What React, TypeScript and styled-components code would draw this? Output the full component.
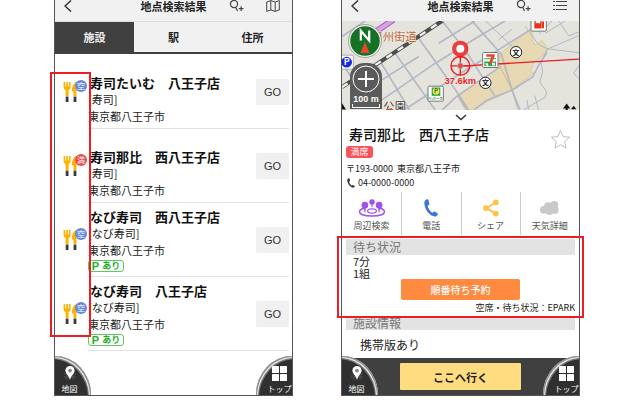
import React from "react";
import styled, { createGlobalStyle, css } from "styled-components";

const GlobalStyle = createGlobalStyle`
  *, *::before, *::after { box-sizing: border-box; }
  body {
    margin: 0;
    background: #fff;
    color: #222;
    font-family: "Noto Sans CJK JP", "Noto Sans", sans-serif;
  }
  h1, h2, h3, p, ul { margin: 0; padding: 0; font-weight: 400; }
  ul { list-style: none; }
  button {
    border: 0;
    padding: 0;
    background: none;
    color: inherit;
    font: inherit;
    cursor: pointer;
  }
  svg { display: block; }
`;

const Page = styled.main`
  display: grid;
  grid-template-columns: 1fr 1fr;
  gap: 48px;
  min-height: 100vh;
  padding: 0 60px 4px 54px;
`;

const Phone = styled.section`
  position: relative;
  display: flex;
  flex-direction: column;
  min-width: 0;
  border: 1px solid #555;
  border-top: 0;
  background: #fff;
`;

const Header = styled.header`
  display: grid;
  grid-template-columns: 1fr auto 1fr;
  align-items: center;
  height: 21px;
  padding: 0 9px 9px;
  background: #f1f1f1;
`;

const HeaderTitle = styled.h1`
  font-size: 11px;
  line-height: 12px;
  font-weight: 700;
`;

const HeaderActions = styled.div`
  display: flex;
  justify-content: flex-end;
  gap: 22px;
  padding-right: 3px;
`;

const IconButton = styled.button`
  display: flex;
  justify-self: start;
`;

const Tabs = styled.nav`
  display: grid;
  grid-template-columns: repeat(3, 1fr);
  height: 33px;
  border-top: 1px solid #ddd;
  border-bottom: 2px solid #404040;
  background: #f1f1f1;
`;

const Tab = styled.button<{ $active?: boolean }>`
  font-size: 11px;
  font-weight: 700;
  background: ${(p) => (p.$active ? "#404040" : "transparent")};
  color: ${(p) => (p.$active ? "#eee" : "#222")};
`;

const Results = styled.ul`
  padding-top: 1px;
`;

const Row = styled.li`
  display: grid;
  grid-template-columns: 33px 1fr;
  min-height: 74px;
`;

const Category = styled.div`
  position: relative;
  display: flex;
  align-items: center;
  padding-left: 8px;
`;

const SeatBadge = styled.span<{ $full: boolean }>`
  position: absolute;
  right: 1px;
  top: calc(50% - 12px);
  width: 12px;
  height: 12px;
  border-radius: 50%;
  background: ${(p) => (p.$full ? "#f0484d" : "#6289df")};
  color: #fff;
  font-size: 8px;
  line-height: 12px;
  text-align: center;
`;

const RowBody = styled.div`
  display: flex;
  align-items: center;
  justify-content: space-between;
  margin-right: 3px;
  border-bottom: 1px solid #e2e2e2;
`;

const RowText = styled.div`
  align-self: flex-end;
  padding-bottom: 3px;
  white-space: nowrap;
`;

const RowTitle = styled.h2`
  padding-left: 2px;
  font-size: 13px;
  line-height: 17px;
  font-weight: 700;
  color: #111;
`;

const RowLine = styled.p`
  font-size: 11px;
  line-height: 17px;
`;

const ParkingTag = styled.p`
  display: flex;
  align-items: center;
  justify-content: center;
  gap: 3px;
  width: 36px;
  height: 12px;
  margin: 1px 0;
  border: 1px solid #5fc95f;
  border-radius: 3px;
  color: #1fae2b;
  font-size: 9px;
  line-height: 10px;
  font-weight: 700;
`;

const ParkingMark = styled.span`
  font-family: "Liberation Sans", sans-serif;
  font-size: 11px;
`;

const GoButton = styled.button`
  width: 33px;
  height: 26px;
  border-radius: 1px;
  background: #f0f0f0;
  color: #333;
  font-family: "Liberation Sans", sans-serif;
  font-size: 11px;
`;

const CornerButton = styled.button<{ $side: "left" | "right" }>`
  position: absolute;
  bottom: 0;
  display: flex;
  flex-direction: column;
  align-items: center;
  justify-content: flex-end;
  gap: 3px;
  width: 36px;
  height: 39px;
  padding-bottom: 1px;
  background: #303030;
  color: #fff;
  font-size: 8px;
  line-height: 10px;
  white-space: nowrap;
  ${(p) =>
    p.$side === "left"
      ? css`
          left: 0;
          padding-right: 7px;
          border-top-right-radius: 100%;
          box-shadow: inset -1px 1px 0 #8d8d8d, inset -2px 2px 0 #e4e4e4, inset -3px 3px 0 #777;
        `
      : css`
          right: 0;
          padding-left: 11px;
          border-top-left-radius: 100%;
          box-shadow: inset 1px 1px 0 #8d8d8d, inset 2px 2px 0 #e4e4e4, inset 3px 3px 0 #777;
        `}
`;

const Callout = styled.div<{ $area: "icons" | "wait" }>`
  position: absolute;
  border: 2px solid #ee1c25;
  pointer-events: none;
  ${(p) =>
    p.$area === "icons"
      ? css`
          top: 72px;
          left: -5px;
          width: 41px;
          height: 265px;
        `
      : css`
          inset: -3px -5px -1px;
        `}
`;

const MapArea = styled.div`
  position: relative;
  height: 89px;
  overflow: hidden;
  background: #e5e4dc;
`;

const Compass = styled.button`
  position: absolute;
  top: 3px;
  left: 6px;
`;

const ZoomIn = styled.button`
  position: absolute;
  top: 42px;
  left: 8px;
  display: flex;
  flex-direction: column;
  align-items: center;
  width: 32px;
  height: 46px;
  border-radius: 14px 14px 0 0;
  background: #5b5b5b;
  color: #fff;
  font-family: "Liberation Sans", sans-serif;
  font-size: 9px;
  line-height: 10px;
  font-weight: 700;
  white-space: nowrap;
`;

const ScaleBar = styled.span`
  width: 28px;
  height: 4px;
  border: 1px solid #fff;
  border-top: 0;
`;

const Collapse = styled.button`
  display: flex;
  align-items: center;
  justify-content: center;
  height: 14px;
`;

const Place = styled.div`
  display: flex;
  align-items: flex-start;
  justify-content: space-between;
  padding: 0 8px 0 4px;
  white-space: nowrap;
`;

const PlaceName = styled.h2`
  padding-left: 3px;
  font-size: 14px;
  line-height: 21px;
  font-weight: 500;
  color: #111;
`;

const FullTag = styled.p`
  width: 27px;
  height: 12px;
  margin: 1px 0 4px;
  border-radius: 3px;
  background: #f9525a;
  color: #fff;
  font-size: 9px;
  line-height: 12px;
  text-align: center;
`;

const PlaceLine = styled.p`
  display: flex;
  align-items: center;
  gap: 2px;
  font-size: 9px;
  line-height: 14px;
`;

const Favorite = styled.button`
  margin-top: 5px;
`;

const Actions = styled.div`
  display: grid;
  grid-template-columns: repeat(4, 1fr);
  height: 43px;
  margin-top: 2px;
`;

const Action = styled.button`
  display: flex;
  flex-direction: column;
  align-items: center;
  gap: 2px;
  padding-top: 7px;
  font-size: 9px;
  line-height: 14px;
  color: #555;
  & + & { border-left: 1px solid #ccc; }
`;

const WaitSection = styled.section`
  position: relative;
  margin-top: 4px;
  height: 78px;
`;

const SectionTitle = styled.h3`
  height: 16px;
  margin: 0 4px;
  padding-left: 7px;
  background: #e3e3e3;
  color: #777;
  font-size: 12px;
  line-height: 15px;
`;

const InfoTitle = styled(SectionTitle)`
  height: 13px;
  line-height: 12px;
`;

const WaitLine = styled.p`
  padding-left: 11px;
  font-size: 11px;
  line-height: 12px;
`;

const ReserveButton = styled.button`
  display: block;
  width: 50%;
  height: 21px;
  margin: 0 auto;
  border-radius: 2px;
  background: #ff8a40;
  color: #fff;
  font-size: 10px;
  line-height: 20px;
  font-weight: 500;
`;

const Source = styled.p`
  padding-right: 4px;
  font-size: 9px;
  line-height: 16px;
  text-align: right;
`;

const Feature = styled.p`
  padding: 6px 0 0 18px;
  font-size: 12px;
  line-height: 18px;
`;

const Footer = styled.footer`
  display: flex;
  align-items: center;
  justify-content: center;
  height: 37px;
  margin-top: auto;
  background: #404040;
`;

const GoHereButton = styled.button`
  width: 51%;
  height: 27px;
  border-radius: 1px;
  background: #ffdc80;
  color: #222;
  font-size: 11px;
  font-weight: 700;
`;

const BackIcon = () => (
  <svg width="8" height="12" viewBox="0 0 8 12" fill="none" stroke="#333" strokeWidth="1.5">
    <path d="M7 .5 1 6l6 5.5" />
  </svg>
);

const SearchPlusIcon = () => (
  <svg width="15" height="12" viewBox="0 0 15 12" fill="none" stroke="#444" strokeWidth="1.2">
    <circle cx="5" cy="4" r="3.6" />
    <path d="M6.5 7.3 8.6 11M9.8 8.6h4.7M12.1 6.2V11" />
  </svg>
);

const MapIcon = () => (
  <svg width="14" height="12" viewBox="0 0 14 12" fill="none" stroke="#444" strokeLinejoin="round">
    <path d="M.7 2 4.8.6 9.2 2l4.1-1.4V10l-4.1 1.4L4.8 10 .7 11.4zM4.8.6V10M9.2 2v9.4" />
  </svg>
);

const ListIcon = () => (
  <svg width="14" height="10" viewBox="0 0 14 10" stroke="#444">
    <path d="M0 1.5h2M3 1.5h11M0 5.5h2M3 5.5h11M0 9.5h2M3 9.5h11" />
  </svg>
);

const CutleryIcon = () => (
  <svg width="15" height="22" viewBox="0 0 15 22">
    <path
      d="M.6 1v5.300c0 1.600.8 2.300 2 2.700V15h3V9c1.200-.4 2-1.100 2-2.700V1H6v4.600H5V1H3.200v4.600h-1V1z"
      fill="#fdb300"
    />
    <path d="M13.400.4C10.400 2.400 8.600 6 8.800 10.400h1.700V15h2.900z" fill="#fdb300" />
    <path d="M2.700 15.500h2.800V21H2.700zM10.600 15.500h2.800V21h-2.800z" fill="#3c3c3c" />
  </svg>
);

const PinIcon = () => (
  <svg width="14" height="15" viewBox="0 0 14 15">
    <path d="M1 8h12M1 11h12M4 6v8M10 6v8" stroke="#666" strokeWidth=".6" />
    <path d="M7 0a4.600 4.600 0 0 0-4.600 4.600C2.400 7.500 5.600 9.200 7 14c1.400-4.800 4.600-6.500 4.600-9.400A4.600 4.600 0 0 0 7 0z" fill="#fff" />
    <circle cx="7" cy="4.600" r="1.900" fill="#888" />
  </svg>
);

const TopIcon = () => (
  <svg width="15" height="15" viewBox="0 0 15 15" fill="#fff">
    <rect width="7" height="7" rx=".6" />
    <rect x="8" width="7" height="7" rx=".6" />
    <rect y="8" width="7" height="7" rx=".6" />
    <rect x="8" y="8" width="7" height="7" rx=".6" />
  </svg>
);

const handset =
  "M3.300.4C1 1 .3 3.200.7 6c.8 5.500 4.700 11 9.700 13 2.100.8 4.300.1 5.200-1.900.3-.6.100-1-.4-1.300l-3-1.800c-.6-.3-1-.2-1.400.3l-.9 1.100C7 14 4.700 10.300 4.200 7.400l1.400-.7c.5-.3.700-.6.600-1.200L5.300 1.300C5.100.5 4.400.1 3.300.4z";

const HandsetIcon = ({ size, color }: { size: number; color: string }) => (
  <svg width={size} height={size} viewBox="-2 0 20 20">
    <path d={handset} fill={color} />
  </svg>
);

const NearbyIcon = () => (
  <svg width="28" height="18" viewBox="0 0 28 19">
    <path
      d="M6 9.500C2.500 10.500.8 12 .8 13.500.8 16.300 6.500 18 14 18s13.200-1.700 13.200-4.500c0-1.500-1.700-3-5.200-4"
      fill="none"
      stroke="#a04ff0"
      strokeWidth="1.500"
    />
    <ellipse cx="14" cy="12.600" rx="4.600" ry="2.200" fill="none" stroke="#a04ff0" strokeWidth="1.300" />
    <g fill="#a04ff0">
      <circle cx="6.500" cy="6.500" r="3.500" />
      <circle cx="21.500" cy="6.500" r="3.500" />
      <circle cx="14" cy="3.200" r="2.900" />
      <path d="M5.500 9h2l-.5 5H6zM20.500 9h2l-.5 5h-1zM13.200 5.500h1.600L14.400 9h-.8z" />
    </g>
  </svg>
);

const ShareIcon = () => (
  <svg width="18" height="18" viewBox="0 0 18 19">
    <path d="M14 3.500 4 9.700l10 5.800" fill="none" stroke="#fdc44c" strokeWidth="2" />
    <g fill="#fdc44c">
      <circle cx="14" cy="3.600" r="3" />
      <circle cx="3.600" cy="9.600" r="3" />
      <circle cx="14" cy="15.400" r="3" />
    </g>
  </svg>
);

const CloudIcon = () => (
  <svg width="21" height="18" viewBox="0 0 21 19" fill="#c9c9c9">
    <circle cx="4.500" cy="11.500" r="4" />
    <circle cx="9" cy="7.500" r="4.200" />
    <circle cx="15.500" cy="6.500" r="4.300" />
    <circle cx="16" cy="11.500" r="4.200" />
    <circle cx="10.500" cy="13" r="4" />
  </svg>
);

const StarIcon = () => (
  <svg width="21" height="21" viewBox="0 0 21 21" fill="none" stroke="#bdbdbd" strokeLinejoin="round">
    <path d="m10.500 1.500 2.600 6.100 6.500.6-4.900 4.400 1.400 6.500-5.600-3.400-5.600 3.400 1.400-6.500-4.900-4.400 6.500-.6z" />
  </svg>
);

const SchoolMark = ({ x, y }: { x: number; y: number }) => (
  <g>
    <circle cx={x} cy={y} r="17" fill="#fff" stroke="#222" strokeWidth="3" />
    <text x={x} y={y + 8} fontSize="22" fontWeight="700" textAnchor="middle" fill="#222">
      文
    </text>
  </g>
);

const StreetMap = () => (
  <svg width="100%" height="100%" viewBox="50 63 711 268" preserveAspectRatio="xMidYMid slice">
    <path
      fill="#e6d9b3"
      stroke="#d5bd86"
      strokeWidth="2"
      d="m397 287 128-86 35 70-75 34-40 26h-25zM523 163l90-73 10 15-3 15 10 15 20-13 17 26-22 27-18 7-12 33 10 5-65 50-37-71z"
    />
    <g fill="none" stroke="#b3b7c6" strokeWidth="5">
      <path d="M208 158 330 331M278 112 390 270l40 61M165 185l88 146M350 63l68 85 90 140M50 190l60 90M440 63l88 100 32 108 24 60" />
      <path d="M170 300 330 190l125-77 85-50M235 331l170-110 100-62 108-68 50-28M350 331l45-42 130-88M340 130l110-67M170 240l110-70M50 110l70-47" />
      <path d="M397 287 427 331M445 331l40-30 75-30 62-40 20-38 23-35" />
      <path strokeWidth="3" d="m600 80 40 55 27 12 96 12M667 147l-20 40 5 25-8 35 20 30-4 15-65 38M700 63l30 45 32-12M668 147l94-40M745 220l18-25M745 220l18 18M680 63l-40 40M660 100l60-37M560 271l18 58" />
      <path strokeWidth="3" d="m480 63 80 76M520 120l40-32M610 331l-5-30M640 331l-12-44" />
    </g>
    <path d="m152 95 53-36" stroke="#9a5fae" strokeWidth="18" />
    <path d="m152 95 53-36" stroke="#dba0e8" strokeWidth="12" />
    <path d="M50 262 352 62" stroke="#4c4c4c" strokeWidth="12" />
    <path d="M50 262 352 62" stroke="#f4f4f4" strokeWidth="7" strokeDasharray="20 20" />
    <text x="138" y="124" fontSize="34" fill="#b9673f" stroke="#f3efe6" strokeWidth="3" paintOrder="stroke">
      甲州街道
    </text>
    <text x="174" y="334" fontSize="34" fill="#333" stroke="#f3efe6" strokeWidth="3" paintOrder="stroke">
      公園
    </text>
    <path d="M182 331c4-6 20-6 24 0z" fill="#e8442e" />
    <path d="m50 310 12 19H50zM724 311l11 15h-8v5h-6v-5h-8zM745 318l8 10h-16z" fill="#111" />
    <g>
      <rect x="30" y="166" width="54" height="42" rx="4" fill="#fff" stroke="#888" strokeWidth="2" />
      <circle cx="64" cy="187" r="16" fill="#1626e8" />
      <text x="64" y="197" fontSize="27" fontWeight="700" fill="#fff" textAnchor="middle">P</text>
    </g>
    <g>
      <rect x="308" y="259" width="46" height="45" rx="3" fill="#fff" stroke="#777" strokeWidth="3" />
      <path d="M319 263h26v25h-26z" fill="#2aa84a" />
      <circle cx="332" cy="274" r="10" fill="#f5e33a" />
      <text x="332" y="281" fontSize="18" fontWeight="700" fill="#14803a" textAnchor="middle">P</text>
      <path d="M313 290h36v11h-36z" fill="#fff" />
      <text x="331" y="300" fontSize="11" fontWeight="700" fill="#14803a" textAnchor="middle">リパーク</text>
    </g>
    <path d="m405 199 357-21" stroke="#f01820" strokeWidth="4" />
    <g>
      <rect x="472" y="158" width="46" height="45" rx="3" fill="#fff" stroke="#777" strokeWidth="3" />
      <path d="M477 175h35v24h-35z" fill="#2aa84a" />
      <path d="M477 178h35v7h-35z" fill="#fff" />
      <path d="M483 163h25v7l-10 22h-8l8-21h-15z" fill="#e8442e" />
      <path d="M480 190h7l3 8h-8zM500 189h9v8h-9z" fill="#fff" />
    </g>
    <g>
      <rect x="617" y="48" width="46" height="46" rx="3" fill="#fff" stroke="#777" strokeWidth="3" />
      <path d="M627 58h22v28h-22zM650 65h6v20h-6z" fill="#e8341c" />
      <path d="M631 62h14v8h-14z" fill="#fff" />
    </g>
    <SchoolMark x={572} y={157} />
    <SchoolMark x={480} y={249} />
    <path d="M405 123c-29 0-31 36-12 45l12 7 12-7c19-9 17-45-12-45z" fill="#e8403c" />
    <circle cx="405" cy="147" r="12" fill="#fff" />
    <g fill="none" stroke="#f01820" strokeWidth="4">
      <circle cx="405" cy="198" r="28" />
      <path d="M405 170v19M405 207v19M377 198h19M414 198h19" />
    </g>
    <circle cx="405" cy="198" r="8" fill="#f0443c" stroke="#999" strokeWidth="3" />
    <text
      x="405"
      y="252"
      fontFamily="Liberation Sans, sans-serif"
      fontSize="28"
      fontWeight="700"
      fill="#e8232a"
      stroke="#f3efe6"
      strokeWidth="3"
      paintOrder="stroke"
      textAnchor="middle"
    >
      37.6km
    </text>
  </svg>
);

const CompassIcon = () => (
  <svg width="34" height="34" viewBox="0 0 34 34">
    <circle cx="17" cy="17" r="15.500" fill="#157225" stroke="#eee" strokeWidth="1.500" />
    <circle cx="17" cy="17" r="16.500" fill="none" stroke="#888" strokeWidth=".7" />
    <path d="M12.800 16.500V6.800l8.400 9.700V6.600" fill="none" stroke="#fff" strokeWidth="2.200" />
    <path d="m17 18 4.500 11h-9z" fill="#f0442e" />
  </svg>
);

const PlusIcon = () => (
  <svg width="30" height="31" viewBox="0 0 30 31" fill="none" stroke="#fff">
    <circle cx="15" cy="16" r="13" />
    <path d="M7 16h16M15 8v16" strokeWidth="2" />
  </svg>
);

interface Spot {
  name: string;
  kind: string;
  full?: boolean;
  parking?: boolean;
}

const spots: Spot[] = [
  { name: "寿司たいむ　八王子店", kind: "[寿司]" },
  { name: "寿司那比　西八王子店", kind: "[寿司]", full: true },
  { name: "なび寿司　西八王子店", kind: "[なび寿司]", parking: true },
  { name: "なび寿司　八王子店", kind: "[なび寿司]", parking: true },
];

const TopBar = ({ action, label }: { action: React.ReactNode; label: string }) => (
  <Header>
    <IconButton aria-label="戻る"><BackIcon /></IconButton>
    <HeaderTitle>地点検索結果</HeaderTitle>
    <HeaderActions>
      <IconButton aria-label="検索条件を追加"><SearchPlusIcon /></IconButton>
      <IconButton aria-label={label}>{action}</IconButton>
    </HeaderActions>
  </Header>
);

const CornerButtons = () => (
  <>
    <CornerButton $side="left"><PinIcon />地図</CornerButton>
    <CornerButton $side="right"><TopIcon />トップ</CornerButton>
  </>
);

const ResultList = () => (
  <Phone>
    <TopBar action={<MapIcon />} label="地図表示" />
    <Tabs>
      <Tab $active>施設</Tab>
      <Tab>駅</Tab>
      <Tab>住所</Tab>
    </Tabs>
    <Results>
      {spots.map((spot) => (
        <Row key={spot.name}>
          <Category>
            <CutleryIcon />
            <SeatBadge $full={!!spot.full}>{spot.full ? "満" : "空"}</SeatBadge>
          </Category>
          <RowBody>
            <RowText>
              <RowTitle>{spot.name}</RowTitle>
              <RowLine>{spot.kind}</RowLine>
              <RowLine>東京都八王子市</RowLine>
              {spot.parking && <ParkingTag><ParkingMark>P</ParkingMark>あり</ParkingTag>}
            </RowText>
            <GoButton>GO</GoButton>
          </RowBody>
        </Row>
      ))}
    </Results>
    <CornerButtons />
    <Callout $area="icons" />
  </Phone>
);

const SpotDetail = () => (
  <Phone>
    <TopBar action={<ListIcon />} label="一覧表示" />
    <MapArea>
      <StreetMap />
      <Compass aria-label="北を上にする"><CompassIcon /></Compass>
      <ZoomIn aria-label="拡大">
        <PlusIcon />
        100 m
        <ScaleBar />
      </ZoomIn>
    </MapArea>
    <Collapse aria-label="地図を閉じる">
      <svg width="12" height="7" viewBox="0 0 12 7" fill="none" stroke="#333" strokeWidth="1.500">
        <path d="m1 1 5 4.500L11 1" />
      </svg>
    </Collapse>
    <Place>
      <div>
        <PlaceName>寿司那比　西八王子店</PlaceName>
        <FullTag>満席</FullTag>
        <PlaceLine><span>〒193-0000</span><span>&nbsp;東京都八王子市</span></PlaceLine>
        <PlaceLine><HandsetIcon size={10} color="#333" />04-0000-0000</PlaceLine>
      </div>
      <Favorite aria-label="お気に入り"><StarIcon /></Favorite>
    </Place>
    <Actions>
      <Action><NearbyIcon />周辺検索</Action>
      <Action><HandsetIcon size={18} color="#3f74e0" />電話</Action>
      <Action><ShareIcon />シェア</Action>
      <Action><CloudIcon />天気詳細</Action>
    </Actions>
    <WaitSection>
      <SectionTitle>待ち状況</SectionTitle>
      <WaitLine>7分</WaitLine>
      <WaitLine>1組</WaitLine>
      <ReserveButton>順番待ち予約</ReserveButton>
      <Source>空席・待ち状況：EPARK</Source>
      <Callout $area="wait" />
    </WaitSection>
    <InfoTitle>施設情報</InfoTitle>
    <Feature>携帯版あり</Feature>
    <Footer>
      <GoHereButton>ここへ行く</GoHereButton>
    </Footer>
    <CornerButtons />
  </Phone>
);

export default function App() {
  return (
    <>
      <GlobalStyle />
      <Page>
        <ResultList />
        <SpotDetail />
      </Page>
    </>
  );
}
